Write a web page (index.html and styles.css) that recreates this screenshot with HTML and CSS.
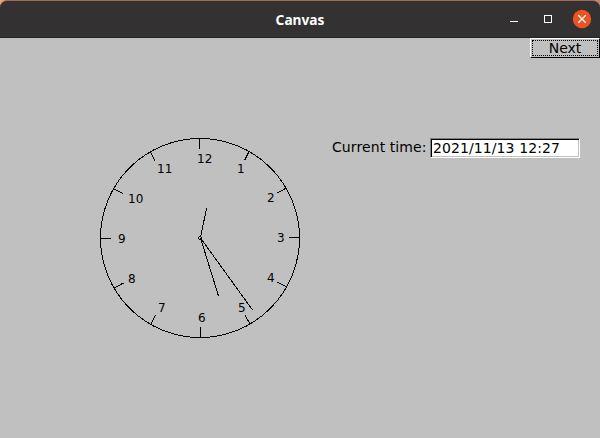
FILE: index.html
```html
<!DOCTYPE html>
<html lang="en">
<head>
<meta charset="utf-8">
<title>Canvas</title>
<link rel="stylesheet" href="styles.css">
</head>
<body>
<div class="window">
  <header class="titlebar">
    <h1 class="title">Canvas</h1>
    <svg class="controls" width="100" height="38" viewBox="0 0 100 38">
      <path d="M10 21.5h8" stroke="#fff" fill="none"/>
      <rect x="44.5" y="15.5" width="7" height="7" stroke="#fff" fill="none"/>
      <circle cx="82" cy="19" r="9.2" fill="#e95420"/>
      <path d="M78.3 15.3l7.4 7.4M85.7 15.3l-7.4 7.4" stroke="#fff" stroke-width="1.3" fill="none"/>
    </svg>
  </header>
  <main class="content">
    <button class="next"><span class="focus">Next</span></button>
    <div class="row">
      <svg class="clock" width="202" height="202" viewBox="99 137 202 202">
        <g class="lines">
          <circle cx="200" cy="238" r="99.5"/>
          <circle cx="199.8" cy="238" r="1.4"/>
          <path d="M199.5 138v11M249 151.500l-4.500 9M286.500 188l-9.500 5M300 237.500h-11M287 287l-10-5M250 324l-5-9M200.500 338v-11M151 324.500l4.500-9.500M114 288l9.500-5M100 238.500h11M113.500 189l9.500 4.500M150 151.500l5 9"/>
          <path d="M200.500 237.500l6-29M200.500 238l18 58M200.500 238l52 72"/>
        </g>
        <g class="digits">
          <text x="197" y="163">12</text><text x="237" y="173">1</text>
          <text x="267" y="202">2</text><text x="277" y="242">3</text>
          <text x="267" y="282">4</text><text x="238" y="312">5</text>
          <text x="198" y="322">6</text><text x="158" y="312">7</text>
          <text x="128" y="283">8</text><text x="118" y="243">9</text>
          <text x="128" y="203">10</text><text x="157" y="173">11</text>
        </g>
      </svg>
      <label class="field"><span>Current time:</span><input type="text" value="2021/11/13 12:27"></label>
    </div>
  </main>
</div>
</body>
</html>
```
FILE: styles.css
```css
* { box-sizing: border-box; }
body {
  margin: 0;
  background: linear-gradient(90deg, #f0a080 0, #f0a080 20px, #c88070 100%);
  font-family: "DejaVu Sans", sans-serif;
  font-size: 14px;
  color: #000;
}
.window {
  height: 438px;
  display: flex;
  flex-direction: column;
  background: #c0c0c0;
  border-radius: 7px 7px 0 0;
}
.titlebar {
  height: 38px;
  display: grid;
  grid-template-columns: 100px 1fr 100px;
  align-items: center;
  background: #333132;
  border-top: 1px solid #a66850;
  border-bottom: 1px solid #232122;
  border-radius: 7px 7px 0 0;
}
.title {
  grid-column: 2;
  margin: 0;
  text-align: center;
  font: bold 13.7px/20px "Noto Sans", sans-serif;
  color: #fff;
}
.controls { margin-top: -1px; align-self: start; }
.content { flex: 1; display: flex; flex-direction: column; }
.next {
  align-self: flex-end;
  width: 70px;
  height: 20px;
  padding: 1px;
  border: 1px solid;
  border-color: #fff #000 #000 #fff;
  background: #c0c0c0;
  font: inherit;
  color: #000;
}
.focus {
  display: block;
  height: 16px;
  line-height: 15px;
  border: 1px dotted #000;
}
.row { display: flex; padding: 79px 0 0 99px; gap: 31px; }
.clock { display: block; flex: none; }
.lines { fill: none; stroke: #000; stroke-width: 1; shape-rendering: crispEdges; }
.digits { font-size: 12px; fill: #000; }
.field { display: flex; align-items: center; height: 20px; margin-top: 1px; white-space: nowrap; }
.field span { width: 98px; padding-bottom: 2px; letter-spacing: 0.09px; }
.field input {
  width: 150px;
  height: 20px;
  padding: 0 1px;
  border: 1px solid;
  border-color: #808080 #fff #fff #808080;
  box-shadow: inset 1px 1px #000, inset -1px -1px #c0c0c0;
  padding-left: 2px;
  background: #fff;
  font: inherit;
  letter-spacing: 0.09px;
  color: #000;
}
```
